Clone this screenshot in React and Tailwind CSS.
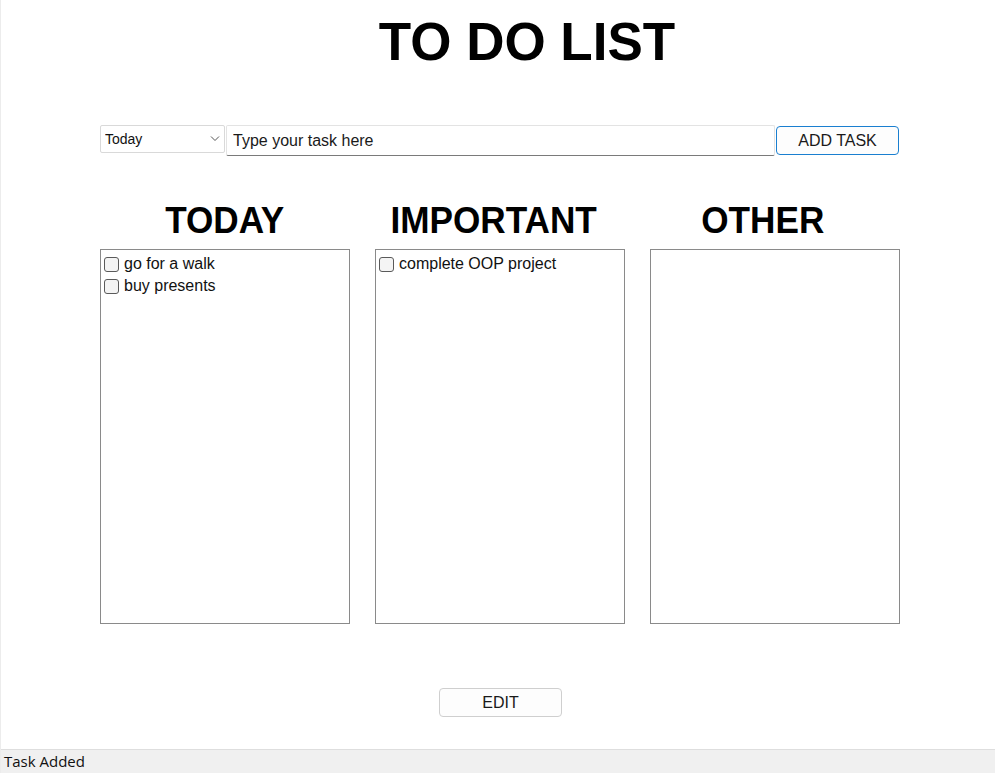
import React, { useState } from 'react';

const arial = { fontFamily: '"Liberation Sans", Arial, sans-serif' };

const Task = ({ text }) => (
    <label className="flex items-center h-[22px] text-[16px] text-[#111] cursor-pointer">
        <span className="w-[15px] h-[15px] ml-[3px] mr-[5px] border border-[#5a5a5a] rounded-[3px] bg-[#f4f4f4] shrink-0" />
        <span>{text}</span>
    </label>
);

const Heading = ({ title }) => (
    <h2 className="w-[250px] h-[37px] text-[37px] leading-none font-bold text-black text-center">
        <span className="inline-block scale-x-[0.95]">{title}</span>
    </h2>
);

const ListBox = ({ tasks }) => (
    <div className="w-[250px] h-[375px] border border-[#8a8a8a] bg-white pt-[3px]">
        {tasks.map((t) => (
            <Task key={t} text={t} />
        ))}
    </div>
);

export default function App() {
    const [category, setCategory] = useState('Today');

    return (
        <div className="h-[773px] w-[995px] bg-white flex flex-col border-l border-[#ececec] overflow-hidden" style={arial}>
            <div className="flex flex-col items-center pt-[15px] pl-[58px]">
                <h1 className="h-[52px] text-[53px] leading-none font-bold text-black">TO DO LIST</h1>
            </div>

            {/* task entry row */}
            <div className="flex items-start mt-[58px] ml-[99px] w-[800px]">
                <div className="relative w-[125px] h-[28px]">
                    <select
                        value={category}
                        onChange={(e) => setCategory(e.target.value)}
                        className="appearance-none w-full h-full border border-[#d9d9d9] rounded-[2px] bg-white pl-[4px] text-[14px] text-[#111] outline-none"
                    >
                        <option>Today</option>
                        <option>Important</option>
                        <option>Other</option>
                    </select>
                    <svg className="absolute right-[5px] top-[10px] pointer-events-none" width="10" height="7" viewBox="0 0 10 7">
                        <path d="M1 1.5 L5 5.5 L9 1.5" fill="none" stroke="#555" strokeWidth="1" />
                    </svg>
                </div>
                <input
                    type="text"
                    placeholder="Type your task here"
                    className="ml-[1px] w-[549px] h-[31px] border border-[#e3e3e3] border-b-[#7a7a7a] rounded-[2px] pl-[6px] text-[16px] text-[#111] placeholder:text-[#1a1a1a] outline-none"
                />
                <button className="ml-[1px] mt-[1px] w-[123px] h-[29px] border border-[#1a7fd0] rounded-[4px] bg-[#fdfdfd] text-[16px] text-[#1a1a1a]">
                    ADD TASK
                </button>
            </div>

            {/* column titles */}
            <div className="flex gap-[19px] mt-[46px] ml-[99px]">
                <Heading title="TODAY" />
                <Heading title="IMPORTANT" />
                <Heading title="OTHER" />
            </div>

            {/* the three lists */}
            <div className="flex gap-[25px] mt-[10px] ml-[99px] w-[800px]">
                <ListBox tasks={['go for a walk', 'buy presents']} />
                <ListBox tasks={['complete OOP project']} />
                <ListBox tasks={[]} />
            </div>

            <div className="flex justify-center mt-[64px] ml-[5px]">
                <button className="w-[123px] h-[29px] border border-[#cfcfcf] rounded-[4px] bg-[#fdfdfd] text-[16px] text-[#1a1a1a]">
                    EDIT
                </button>
            </div>

            {/* status bar */}
            <div className="mt-auto h-[24px] bg-[#f0f0f0] border-t border-[#dedede] flex items-center pl-[3px]">
                <span className="text-[15px] text-[#111]" style={{ fontFamily: '"Open Sans", "Noto Sans", sans-serif' }}>Task Added</span>
            </div>
        </div>
    );
}
